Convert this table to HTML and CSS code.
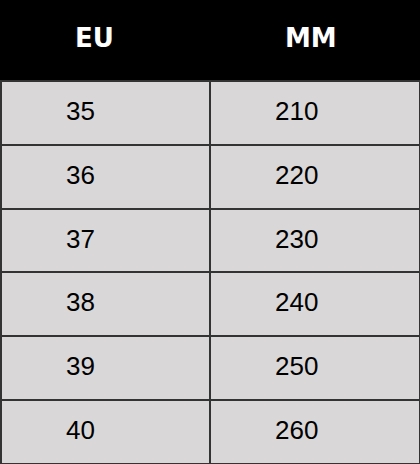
FILE: index.html
```html
<!DOCTYPE html>
<html>
<head>
<meta charset="utf-8">
<link rel="stylesheet" href="styles.css">
</head>
<body>
<div class="table">
  <div class="row head">
    <div class="cell">EU</div>
    <div class="cell right">MM</div>
  </div>
  <div class="row"><div class="cell">35</div><div class="cell right">210</div></div>
  <div class="row"><div class="cell">36</div><div class="cell right">220</div></div>
  <div class="row"><div class="cell">37</div><div class="cell right">230</div></div>
  <div class="row"><div class="cell">38</div><div class="cell right">240</div></div>
  <div class="row"><div class="cell">39</div><div class="cell right">250</div></div>
  <div class="row"><div class="cell">40</div><div class="cell right">260</div></div>
</div>
</body>
</html>
```
FILE: styles.css
```css
html, body {
  margin: 0;
  padding: 0;
  background: #ffffff;
}
.table {
  width: 421px;
  font-family: "Liberation Sans", Arial, sans-serif;
  color: #000;
  background: #d9d7d8;
  border-bottom: 2px solid #333333;
}
.row {
  display: grid;
  grid-template-columns: 209px 1fr;
  height: 63.83px;
  box-sizing: border-box;
  border-top: 2px solid #333333;
  border-left: 2px solid #333333;
  font-size: 26px;
}
.cell {
  display: flex;
  align-items: center;
  padding-left: 64px;
  padding-bottom: 3px;
  border-right: 2px solid #333333;
}
.cell.right {
  padding-left: 64px;
}
.head {
  grid-template-columns: 211px 1fr;
  height: 80px;
  border-top: none;
  border-left: none;
  background: #000;
  color: #fff;
  font-family: "DejaVu Sans", "Liberation Sans", sans-serif;
  font-weight: bold;
  font-size: 26px;
}
.head .cell {
  padding-left: 75px;
  padding-bottom: 4px;
  border-right-color: #000;
}
.head .cell.right {
  padding-left: 74px;
}
```
